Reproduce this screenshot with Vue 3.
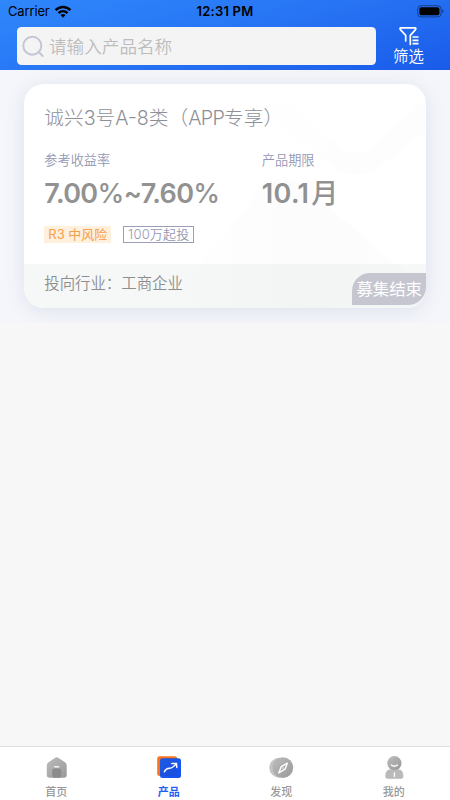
<script setup>
const tabs = [
  { id: 'home', label: '首页' },
  { id: 'product', label: '产品' },
  { id: 'discover', label: '发现' },
  { id: 'mine', label: '我的' },
]
const active = 'product'
</script>

<template>
  <div class="screen">
    <header class="header">
      <div class="status">
        <div class="carrier">
          <span>Carrier</span>
          <svg width="18" height="14" viewBox="0 0 18 14" fill="none" stroke="#000" stroke-width="2.5">
            <path d="M1.6 5.2C5.8 1 12.2 1 16.4 5.2" />
            <path d="M4.5 8.1C7.1 5.6 10.9 5.6 13.5 8.1" />
            <path d="M6.5 10.1Q9 8 11.5 10.1L9 12.7Z" fill="#000" stroke="none" />
          </svg>
        </div>
        <span class="time">12:31 PM</span>
        <svg class="battery" width="28" height="13" viewBox="0 0 28 13">
          <rect x=".7" y=".7" width="23.4" height="11.2" rx="3.3" fill="none" stroke="#000" stroke-opacity=".42" />
          <rect x="2.4" y="2.3" width="20" height="8" rx="1.8" />
          <path d="M25.3 4.3q2.4 2 0 4z" fill-opacity=".5" />
        </svg>
      </div>
      <div class="tools">
        <div class="search">
          <svg width="24" height="24" viewBox="0 0 24 24" fill="none" stroke="#c2c6d6" stroke-width="2" stroke-linecap="round">
            <circle cx="10.3" cy="11.7" r="9" />
            <path d="M16.9 18.3L20.7 22" />
          </svg>
          <span>请输入产品名称</span>
        </div>
        <div class="filter">
          <svg width="22" height="20" viewBox="0 0 22 20" fill="none" stroke="#fff" stroke-width="1.7" stroke-linejoin="round" stroke-linecap="round">
            <path d="M7.7 14V8.4L2.4 2.6Q1.3 1 3 .9H16.8Q18.5 1 17.5 2.6L12.3 8.4V17.4" />
            <path d="M14.5 10h6M14.5 13.3h6M14.5 16.6h6" stroke-linecap="butt" />
          </svg>
          <span>筛选</span>
        </div>
      </div>
    </header>

    <main class="list">
      <article class="card">
        <svg class="pattern" width="402" height="224" viewBox="0 0 402 224">
          <defs>
            <linearGradient id="fade" x1="0" y1="0" x2="1" y2="1">
              <stop offset="0" stop-color="#000" stop-opacity="0" />
              <stop offset="1" stop-color="#000" stop-opacity=".01" />
            </linearGradient>
            <linearGradient id="cone" x1="0" y1="0" x2="1" y2="0">
              <stop offset="0" stop-color="#000" stop-opacity="0" />
              <stop offset=".5" stop-color="#000" stop-opacity=".012" />
              <stop offset="1" stop-color="#000" stop-opacity=".008" />
            </linearGradient>
          </defs>
          <path d="M206 0H247L311 58Q332 80 353 58L402 14V47L357 82Q332 99 307 82Z" fill="url(#fade)" />
          <path d="M140 224L240 101Q262 87 284 106L402 205V224Z" fill="url(#cone)" />
        </svg>
        <div class="body">
          <h2 class="title">诚兴3号A-8类（<span class="latin">APP</span>专享）</h2>
          <div class="metrics">
            <div class="metric rate">
              <span class="label">参考收益率</span>
              <strong>7.00<span class="sign">%</span>~7.60<span class="sign">%</span></strong>
            </div>
            <div class="metric term">
              <span class="label">产品期限</span>
              <strong>10.1<span class="unit">月</span></strong>
            </div>
          </div>
          <div class="tags">
            <span class="risk">R3 中风险</span>
            <span class="minimum">100万起投</span>
          </div>
        </div>
        <footer class="industry">投向行业：工商企业</footer>
        <span class="badge">募集结束</span>
      </article>
    </main>

    <nav class="tabbar">
      <div v-for="t in tabs" :key="t.id" class="tab" :class="{ active: t.id === active }">
        <svg width="28" height="26" viewBox="0 0 28 26">
          <defs>
            <linearGradient id="grey" x1="0" y1="0" x2="1" y2="1">
              <stop offset="0" stop-color="#bcbcbc" /><stop offset="1" stop-color="#999" />
            </linearGradient>
            <linearGradient id="blue" x1="0" y1="0" x2="1" y2="1">
              <stop offset="0" stop-color="#1a62f8" /><stop offset="1" stop-color="#1650f0" />
            </linearGradient>
          </defs>
          <template v-if="t.id === 'home'">
            <path d="M13.2 2.8Q14.7 1.8 16.2 2.8L23.3 7.5Q24.7 8.5 24.7 10.5V20Q24.7 22.8 22 22.8H7.5Q4.8 22.8 4.8 20V10.5Q4.8 8.5 6.2 7.5Z" fill="url(#grey)" />
            <rect x="10.2" y="13.6" width="9" height="9.2" rx="2" fill="#8c8c8c" />
            <path d="M12.2 11.8h5" stroke="#fff" stroke-width="1.3" />
          </template>
          <template v-else-if="t.id === 'product'">
            <rect x="2.2" y="1.3" width="20" height="19.7" rx="2.5" fill="#fb741c" />
            <rect x="5" y="3.2" width="21" height="19.8" rx="2.5" fill="url(#blue)" />
            <path d="M5 5.7Q5 3.2 7.5 3.2H22.2V18.5Q22.2 21 19.7 21H5Z" fill="#283e9c" fill-opacity=".22" />
            <path d="M9.3 16.8C10.8 14 12 13.3 14.2 13.3C17.6 13.3 18.8 11.6 21.3 8.6M16.8 8.5L21.5 8.4L21.8 12.5" fill="none" stroke="#fff" stroke-width="1.4" stroke-linecap="round" />
          </template>
          <template v-else-if="t.id === 'discover'">
            <circle cx="12.3" cy="12.7" r="10" fill="#c5c5c5" />
            <circle cx="15.8" cy="12.7" r="10.4" fill="url(#grey)" />
            <path d="M20.3 8.2L18 14.2L11.8 18L14.2 11.7Z" fill="none" stroke="#fff" stroke-width="1.4" stroke-linejoin="round" />
            <circle cx="16" cy="13" r=".7" fill="#fff" />
          </template>
          <template v-else>
            <path d="M5.3 21Q5.3 14.2 11 14.2H17.7Q23.4 14.2 23.4 21Q23.4 23.7 21 23.7H7.7Q5.3 23.7 5.3 21Z" fill="#bababa" />
            <circle cx="14.4" cy="8.2" r="7.1" fill="url(#grey)" />
            <path d="M11.4 10q3 2.5 6 0M14.4 17.8v3.6" fill="none" stroke="#fff" stroke-width="1.3" stroke-linecap="round" />
          </template>
        </svg>
        <span>{{ t.label }}</span>
      </div>
    </nav>
  </div>
</template>

<style>
body { margin: 0; }
</style>

<style scoped>
.screen {
  width: 450px;
  height: 800px;
  display: flex;
  flex-direction: column;
  overflow: hidden;
  background: #f7f7f7;
  font-family: Inter, "Noto Sans CJK SC", sans-serif;
}
.header {
  box-sizing: border-box;
  height: 70px;
  flex: none;
  background: linear-gradient(165deg, #2f87fb 0%, #2774f4 50%, #195be9 100%);
}
.status {
  height: 27px;
  box-sizing: border-box;
  padding: 0 5px 4px 8px;
  display: grid;
  grid-template-columns: 1fr auto 1fr;
  align-items: center;
  font-size: 13px;
  line-height: 23px;
  color: #000;
}
.carrier { display: flex; align-items: center; gap: 4px; letter-spacing: -.15px; }
.time { font-weight: 600; letter-spacing: .2px; margin-left: -3px; }
.battery { justify-self: end; }
.tools { display: flex; padding-left: 16.5px; }
.search {
  box-sizing: border-box;
  width: 359.5px;
  height: 38px;
  padding-left: 5px;
  border-radius: 4.5px;
  background: #f4f4f4;
  display: flex;
  align-items: center;
  gap: 3.5px;
  font-size: 17.6px;
  color: #bdbdbd;
  font-weight: 350;
}
.search span { margin-top: -2px; }
.filter {
  width: 65px;
  display: flex;
  flex-direction: column;
  align-items: center;
  color: #fff;
  font-size: 15.4px;
  font-weight: 350;
  line-height: 20px;
}
.filter svg { flex: none; }
.list {
  box-sizing: border-box;
  height: 253px;
  flex: none;
  padding: 14px 24.3px 0;
  background: #f4f6fb;
  overflow: hidden;
}
.card {
  position: relative;
  height: 223.5px;
  border-radius: 20px;
  background: #fff;
  box-shadow: 0 3px 20px rgba(70, 80, 120, .12);
  display: flex;
  flex-direction: column;
}
.pattern { position: absolute; inset: 0; border-radius: 20px; }
.body { height: 179.5px; box-sizing: border-box; padding: 20px 20px 0; }
.title {
  margin: 0;
  font-size: 19.7px;
  line-height: 28px;
  font-weight: 300;
  color: #8e9098;
  white-space: nowrap;
}
.latin { letter-spacing: -.7px; }
.metrics { display: flex; margin-top: 18px; }
.metric { display: flex; flex-direction: column; }
.rate { width: 217.5px; }
.label { font-size: 13.2px; line-height: 20px; color: #9497b3; font-weight: 350; }
.metric strong {
  height: 36px;
  margin-top: 6px;
  font-size: 27px;
  line-height: 36px;
  font-weight: 600;
  letter-spacing: -.6px;
  color: #929292;
  white-space: nowrap;
}
.sign { font-weight: 500; }
.term strong { letter-spacing: .35px; }
.unit { margin-left: 2px; font-weight: 500; }
.tags { display: flex; gap: 12px; margin-top: 14px; font-size: 13px; }
.risk {
  box-sizing: border-box;
  width: 67px;
  height: 17px;
  line-height: 17px;
  text-align: center;
  background: #ffefdd;
  color: #f5a04a;
  white-space: nowrap;
}
.minimum {
  box-sizing: border-box;
  width: 71px;
  height: 17px;
  line-height: 15px;
  text-align: center;
  border: 1px solid #9b9eb8;
  color: #9497b3;
  font-weight: 350;
  letter-spacing: .2px;
  white-space: nowrap;
}
.industry {
  box-sizing: border-box;
  height: 44px;
  padding: 8px 20px 0;
  border-radius: 0 0 20px 20px;
  background: #f6f8f8;
  font-size: 15.4px;
  font-weight: 350;
  line-height: 24px;
  color: #8e8e8e;
}
.badge {
  position: absolute;
  right: -.5px;
  bottom: 3px;
  width: 74px;
  height: 32px;
  border-radius: 18px 0 18px 0;
  background: #c6c6d0;
  color: #fff;
  font-size: 16.4px;
  line-height: 32px;
  text-align: center;
  white-space: nowrap;
}
.tabbar {
  box-sizing: border-box;
  height: 54px;
  margin-top: auto;
  border-top: 1px solid #dedede;
  background: #fff;
  display: grid;
  grid-template-columns: repeat(4, 1fr);
}
.tab {
  display: flex;
  flex-direction: column;
  align-items: center;
  padding-top: 8px;
  font-size: 11px;
  line-height: 16px;
  color: #999;
  font-weight: 500;
}
.tab span { margin-top: 3px; }
.tab.active { color: #1d62f5; font-weight: 700; }
</style>
